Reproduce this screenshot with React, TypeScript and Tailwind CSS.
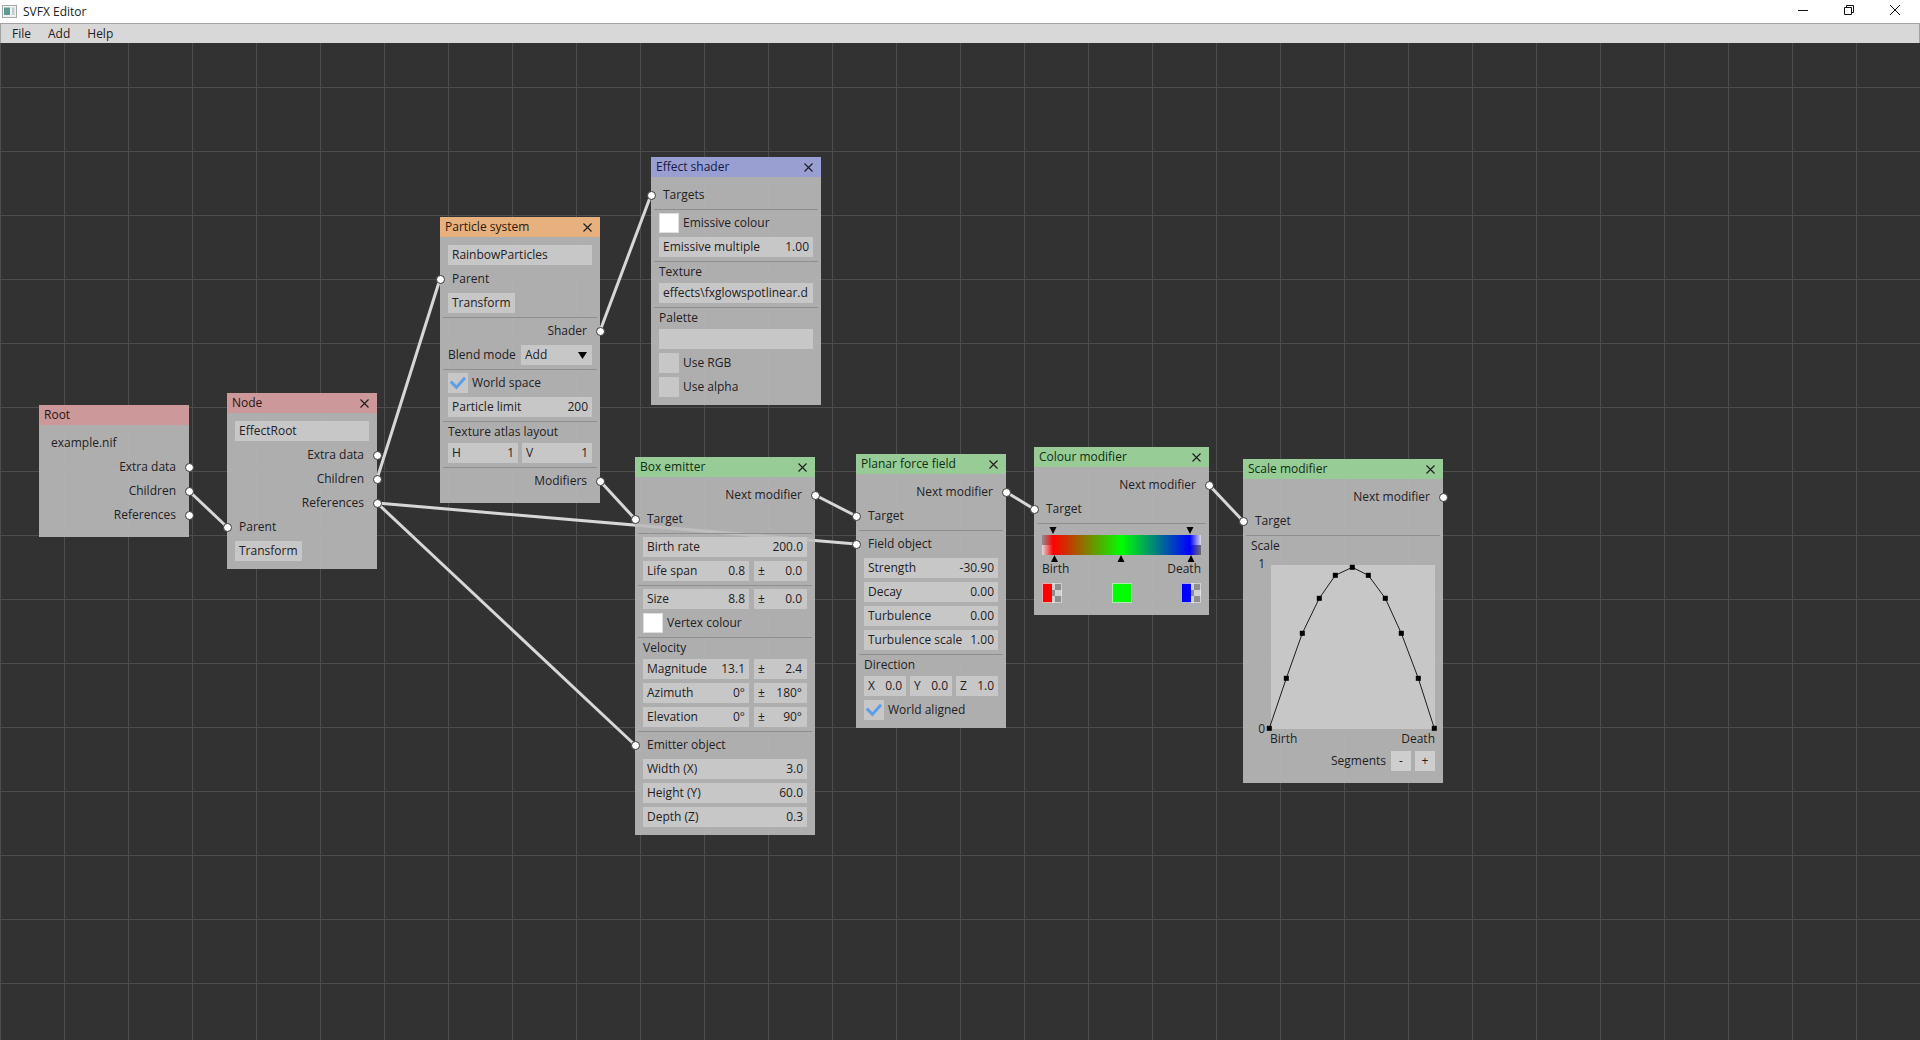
import React from "react";

const Close = () => (
  <svg width="9" height="9" viewBox="0 0 9 9" className="mr-[3px]">
    <path d="M0.5 0.5L8.5 8.5M8.5 0.5L0.5 8.5" stroke="#1c1c1c" strokeWidth="1.1" fill="none" />
  </svg>
);

const Port = ({ side }: { side: "l" | "r" }) => (
  <span
    className={
      "absolute top-[5.5px] h-[9px] w-[9px] rounded-full border border-[#3a3a3a] bg-white " +
      (side === "l" ? "-left-[12.5px]" : "-right-[12.5px]")
    }
  />
);

const Node = ({
  pos,
  title,
  head,
  ink,
  closable = true,
  tight = false,
  children,
}: {
  pos: string;
  title: string;
  head: string;
  ink: string;
  closable?: boolean;
  tight?: boolean;
  children: React.ReactNode;
}) => (
  <div className={"absolute bg-[#bcbbbc]/90 " + pos}>
    <div className={"flex h-5 items-center justify-between pl-[5px] pr-[5px] " + head + " " + ink}>
      <span>{title}</span>
      {closable && <Close />}
    </div>
    <div className={"flex flex-col gap-1 px-2 pt-2 " + (tight ? "pb-3" : "pb-2")}>{children}</div>
  </div>
);

const OutRow = ({ children }: { children: React.ReactNode }) => (
  <div className="relative flex h-5 items-center justify-end pr-[5px]">
    {children}
    <Port side="r" />
  </div>
);

const InRow = ({ children }: { children: React.ReactNode }) => (
  <div className="relative flex h-5 items-center pl-1">
    <Port side="l" />
    {children}
  </div>
);

const Sep = () => <div className="-mx-[5px] -mb-px h-px bg-[#8f8e8f]" />;

const Label = ({ children }: { children: React.ReactNode }) => (
  <div className="flex h-[14px] items-center">{children}</div>
);

const Field = ({ label, value, className = "" }: { label?: string; value?: string; className?: string }) => (
  <div className={"flex h-5 items-center justify-between whitespace-nowrap bg-[#c8c7c8] px-1 " + className}>
    {label !== undefined && <span>{label}</span>}
    {value !== undefined && <span>{value}</span>}
  </div>
);

const Button = ({ children }: { children: React.ReactNode }) => (
  <div className="flex h-5 w-fit items-center bg-[#c8c7c8] px-1">{children}</div>
);

const Check = ({ label, checked, white }: { label: string; checked?: boolean; white?: boolean }) => (
  <div className="flex h-5 items-center gap-1">
    <div className={"flex h-5 w-5 items-center justify-center " + (white ? "border border-[#dedede] bg-white" : "bg-[#c8c7c8]")}>
      {checked && (
        <svg width="20" height="20" viewBox="0 0 20 20">
          <path d="M2.8 8.6L8.4 14.4L17 4.8" stroke="#5b9fe8" strokeWidth="3" fill="none" />
        </svg>
      )}
    </div>
    <span>{label}</span>
  </div>
);

const Spread = ({ label, value, spread }: { label: string; value: string; spread: string }) => (
  <div className="grid grid-cols-[106px_53px] gap-[5px]">
    <Field label={label} value={value} />
    <Field label="±" value={spread} className="pr-[5px]" />
  </div>
);

const Wire = ({ x1, y1, x2, y2 }: { x1: number; y1: number; x2: number; y2: number }) => (
  <line x1={x1} y1={y1} x2={x2} y2={y2} stroke="#d8d7d8" strokeWidth="3" strokeLinecap="round" />
);

const Checker = () => (
  <>
    <rect x="10" y="0" width="3" height="7" fill="#d2d1d2" />
    <rect x="13" y="0" width="7" height="7" fill="#8f8e8f" />
    <rect x="10" y="7" width="3" height="6" fill="#8f8e8f" />
    <rect x="13" y="7" width="7" height="6" fill="#d2d1d2" />
    <rect x="10" y="13" width="3" height="7" fill="#d2d1d2" />
    <rect x="13" y="13" width="7" height="7" fill="#8f8e8f" />
  </>
);

const Swatch = ({ color, alpha }: { color: string; alpha?: boolean }) => (
  <svg width="20" height="20" viewBox="0 0 20 20">
    <rect x="0" y="0" width={alpha ? 10 : 20} height="20" fill={color} />
    {alpha && <Checker />}
    <rect x="0.5" y="0.5" width="19" height="19" fill="none" stroke="#e6e6e6" strokeOpacity="0.75" />
  </svg>
);

const curve: [number, number][] = [
  [-1.7, 163.3],
  [15.3, 113.3],
  [31.3, 68.3],
  [48.3, 33.3],
  [64.3, 10.3],
  [81.3, 2.3],
  [97.3, 10.3],
  [114.3, 33.3],
  [130.3, 68.3],
  [147.3, 113.3],
  [163.3, 163.3],
];

const Plot = () => (
  <svg width="164" height="164" viewBox="0 0 164 164" className="block overflow-visible bg-[#c8c7c8]">
    <polyline points={curve.map((p) => p.join(",")).join(" ")} fill="none" stroke="#1c1c1c" strokeWidth="1" />
    {curve.map(([x, y]) => (
      <rect key={x} x={x - 2.5} y={y - 2.5} width="5" height="5" fill="#000" />
    ))}
  </svg>
);

export default function App() {
  return (
    <div className="flex h-[1040px] w-full flex-col overflow-hidden bg-white font-['Open_Sans','Noto_Sans',sans-serif] text-[12px] leading-none text-[#222122]">
      <div className="flex h-[23px] items-center justify-between bg-white pr-[2px]">
        <div className="flex items-center">
          <svg width="15" height="13" viewBox="0 0 15 13" className="ml-[2px]">
            <rect x="0.5" y="0.5" width="14" height="12" fill="#f0f2f2" stroke="#a3a8a8" />
            <rect x="2" y="2.5" width="6" height="7.5" fill="#5f9a94" />
            <rect x="10" y="2.5" width="2.5" height="7.5" fill="#c6caca" />
          </svg>
          <span className="ml-[6px]">SVFX Editor</span>
        </div>
        <div className="flex self-start">
          <div className="flex h-5 w-[46px] items-center justify-center">
            <svg width="10" height="10" viewBox="0 0 10 10">
              <path d="M0 5.5H10" stroke="#111" strokeWidth="1" fill="none" />
            </svg>
          </div>
          <div className="flex h-5 w-[46px] items-center justify-center">
            <svg width="10" height="10" viewBox="0 0 10 10">
              <path d="M0.5 2.5H7.5V9.5H0.5ZM2.5 2.5V0.5H9.5V7.5H7.5" stroke="#111" strokeWidth="1" fill="none" />
            </svg>
          </div>
          <div className="flex h-5 w-[46px] items-center justify-center">
            <svg width="10" height="10" viewBox="0 0 10 10">
              <path d="M0 0L10 10M10 0L0 10" stroke="#111" strokeWidth="1" fill="none" />
            </svg>
          </div>
        </div>
      </div>

      <div className="flex h-5 items-center gap-[17px] border-x border-t border-[#a3a3a3] bg-[#d9d8d9] pl-[11px]">
        <span>File</span>
        <span>Add</span>
        <span>Help</span>
      </div>

      <div className="relative flex-1 bg-[#333233] bg-[linear-gradient(to_right,#4e4d4e_1px,transparent_1px),linear-gradient(to_bottom,#4e4d4e_1px,transparent_1px)] bg-size-[64px_64px] bg-position-[0px_44px]">
        <svg className="absolute inset-0" width="1920" height="997" viewBox="0 43 1920 997">
          <Wire x1={189} y1={491} x2={227} y2={527} />
          <Wire x1={377} y1={479} x2={440} y2={279} />
          <Wire x1={377} y1={503} x2={635} y2={745} />
          <Wire x1={377} y1={503} x2={856} y2={544} />
          <Wire x1={600} y1={331} x2={651} y2={195} />
          <Wire x1={600} y1={481} x2={635} y2={519} />
          <Wire x1={815} y1={495} x2={856} y2={516} />
          <Wire x1={1006} y1={492} x2={1034} y2={509} />
          <Wire x1={1209} y1={485} x2={1243} y2={521} />
        </svg>

        <Node pos="left-[39px] top-[362px] w-[150px]" title="Root" head="bg-[#cc9899]" ink="text-[#2a1414]" closable={false} tight>
          <div className="flex h-5 items-center pl-1">example.nif</div>
          <OutRow>Extra data</OutRow>
          <OutRow>Children</OutRow>
          <OutRow>References</OutRow>
        </Node>

        <Node pos="left-[227px] top-[350px] w-[150px]" title="Node" head="bg-[#cc9899]" ink="text-[#2a1414]">
          <Field label="EffectRoot" />
          <OutRow>Extra data</OutRow>
          <OutRow>Children</OutRow>
          <OutRow>References</OutRow>
          <InRow>Parent</InRow>
          <Button>Transform</Button>
        </Node>

        <Node pos="left-[440px] top-[174px] w-[160px]" title="Particle system" head="bg-[#e6b07f]" ink="text-[#2c1a08]" tight>
          <Field label="RainbowParticles" />
          <InRow>Parent</InRow>
          <Button>Transform</Button>
          <Sep />
          <OutRow>Shader</OutRow>
          <div className="flex h-5 items-center justify-between">
            <span>Blend mode</span>
            <div className="flex h-5 w-[71px] items-center justify-between bg-[#c8c7c8] pl-1 pr-[5px]">
              <span>Add</span>
              <svg width="9" height="7" viewBox="0 0 9 7">
                <path d="M0 0H9L4.5 7Z" fill="#000" />
              </svg>
            </div>
          </div>
          <Sep />
          <Check label="World space" checked />
          <Field label="Particle limit" value="200" />
          <Sep />
          <Label>Texture atlas layout</Label>
          <div className="grid grid-cols-2 gap-1">
            <Field label="H" value="1" />
            <Field label="V" value="1" />
          </div>
          <Sep />
          <OutRow>Modifiers</OutRow>
        </Node>

        <Node pos="left-[651px] top-[114px] w-[170px]" title="Effect shader" head="bg-[#9a9fd2]" ink="text-[#141a44]">
          <InRow>Targets</InRow>
          <Sep />
          <Check label="Emissive colour" white />
          <Field label="Emissive multiple" value="1.00" />
          <Sep />
          <Label>Texture</Label>
          <Field label="effects\fxglowspotlinear.d" />
          <Sep />
          <Label>Palette</Label>
          <Field />
          <Check label="Use RGB" />
          <Check label="Use alpha" />
        </Node>

        <Node pos="left-[635px] top-[414px] w-[180px]" title="Box emitter" head="bg-[#98cc96]" ink="text-[#0e2e12]">
          <OutRow>Next modifier</OutRow>
          <InRow>Target</InRow>
          <Sep />
          <Field label="Birth rate" value="200.0" />
          <Spread label="Life span" value="0.8" spread="0.0" />
          <Sep />
          <Spread label="Size" value="8.8" spread="0.0" />
          <Check label="Vertex colour" white />
          <Sep />
          <Label>Velocity</Label>
          <Spread label="Magnitude" value="13.1" spread="2.4" />
          <Spread label="Azimuth" value="0°" spread="180°" />
          <Spread label="Elevation" value="0°" spread="90°" />
          <Sep />
          <InRow>Emitter object</InRow>
          <Field label="Width (X)" value="3.0" />
          <Field label="Height (Y)" value="60.0" />
          <Field label="Depth (Z)" value="0.3" />
        </Node>

        <Node pos="left-[856px] top-[411px] w-[150px]" title="Planar force field" head="bg-[#98cc96]" ink="text-[#0e2e12]">
          <OutRow>Next modifier</OutRow>
          <InRow>Target</InRow>
          <Sep />
          <InRow>Field object</InRow>
          <Field label="Strength" value="-30.90" />
          <Field label="Decay" value="0.00" />
          <Field label="Turbulence" value="0.00" />
          <Field label="Turbulence scale" value="1.00" />
          <Sep />
          <Label>Direction</Label>
          <div className="grid grid-cols-3 gap-1">
            <Field label="X" value="0.0" />
            <Field label="Y" value="0.0" />
            <Field label="Z" value="1.0" />
          </div>
          <Check label="World aligned" checked />
        </Node>

        <Node pos="left-[1034px] top-[404px] w-[175px]" title="Colour modifier" head="bg-[#98cc96]" ink="text-[#0e2e12]" tight>
          <OutRow>Next modifier</OutRow>
          <InRow>Target</InRow>
          <Sep />
          <div>
            <div className="relative h-[35px] pt-2">
              <div className="h-[10px] bg-[linear-gradient(to_right,#8f8e8f_0%,#ff0000_7%,#00ff00_50%,#0000ff_93%,#dcdbdc_100%)]" />
              <div className="h-[10px] bg-[linear-gradient(to_right,#dcdbdc_0%,#ff0000_7%,#00ff00_50%,#0000ff_93%,#6f6e6f_100%)]" />
              <svg className="absolute left-0 top-0" width="159" height="35" viewBox="0 0 159 35">
                <path d="M7.5 0H14.5L11 7Z M144.5 0H151.5L148 7Z M9 35H16L12.5 28Z M75.5 35H82.5L79 28Z M145.5 35H152.5L149 28Z" fill="#000" />
              </svg>
            </div>
            <div className="flex h-[14px] items-center justify-between">
              <span>Birth</span>
              <span>Death</span>
            </div>
            <div className="mt-[7px] flex h-5 justify-between">
              <Swatch color="#ff0000" alpha />
              <Swatch color="#00ff00" />
              <Swatch color="#0000ff" alpha />
            </div>
          </div>
        </Node>

        <Node pos="left-[1243px] top-[416px] w-[200px]" title="Scale modifier" head="bg-[#98cc96]" ink="text-[#0e2e12]" tight>
          <OutRow>Next modifier</OutRow>
          <InRow>Target</InRow>
          <Sep />
          <Label>Scale</Label>
          <div className="mt-2 flex">
            <div className="-mb-[7px] -mt-2 flex h-[179px] w-5 flex-col items-end justify-between pr-[6px]">
              <span className="flex h-[14px] items-center">1</span>
              <span className="flex h-[14px] items-center">0</span>
            </div>
            <Plot />
          </div>
          <div className="-mt-px mb-px ml-[19px] flex h-[14px] items-center justify-between">
            <span>Birth</span>
            <span>Death</span>
          </div>
          <div className="flex h-5 items-center justify-end">
            <span className="mr-[5px]">Segments</span>
            <div className="flex h-5 w-5 items-center justify-center bg-[#cfcecf]">-</div>
            <div className="ml-1 flex h-5 w-5 items-center justify-center bg-[#cfcecf]">+</div>
          </div>
        </Node>
      </div>
    </div>
  );
}
